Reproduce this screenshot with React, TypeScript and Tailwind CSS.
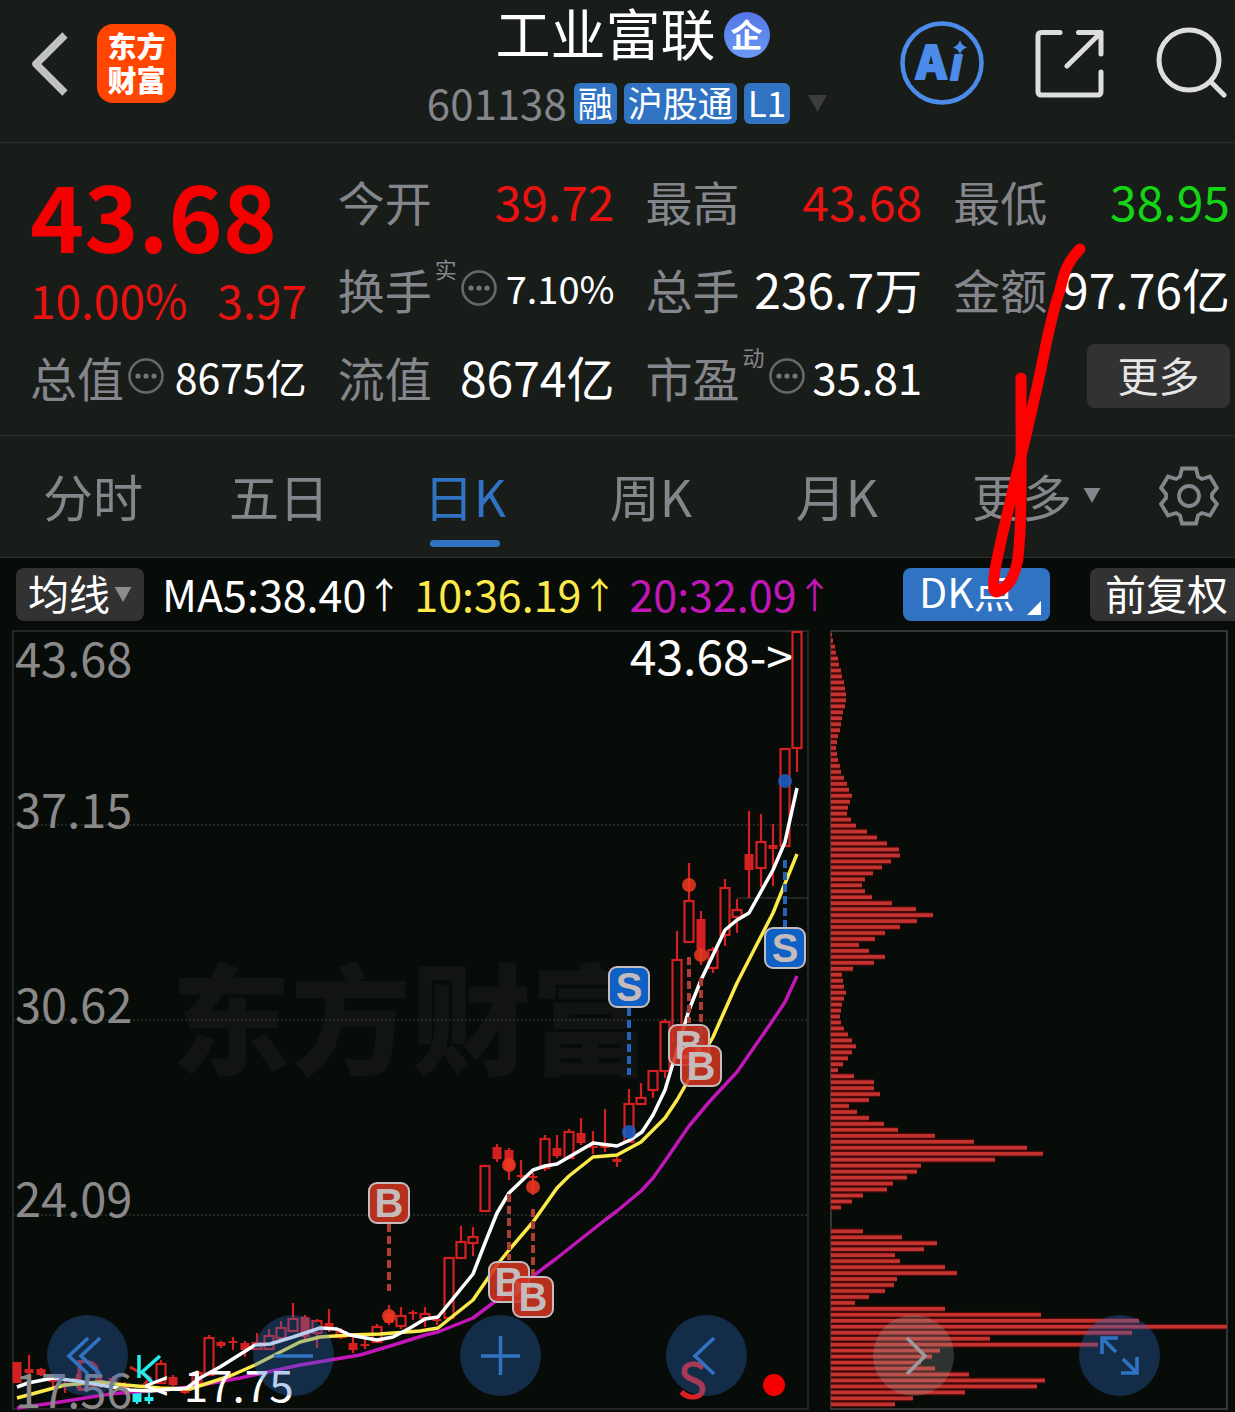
import type { ReactNode } from 'react';

type Candle = [high: number, top: number, bottom: number, low: number, kind: 'up' | 'solid' | 'down'];

const candles: Candle[] = [
  [1362, 1362, 1383, 1383, 'solid'],
  [1355, 1369, 1373, 1374, 'solid'],
  [1368, 1369, 1375, 1376, 'solid'],
  [1376, 1378, 1382, 1387, 'solid'],
  [1381, 1383, 1387, 1393, 'solid'],
  [1374, 1378, 1382, 1388, 'solid'],
  [1378, 1382, 1386, 1390, 'solid'],
  [1376, 1380, 1384, 1388, 'solid'],
  [1376, 1378, 1382, 1384, 'solid'],
  [1382, 1385, 1388, 1395, 'solid'],
  [1392, 1393, 1402, 1404, 'down'],
  [1393, 1397, 1401, 1404, 'down'],
  [1360, 1364, 1383, 1383, 'up'],
  [1375, 1377, 1385, 1386, 'solid'],
  [1388, 1390, 1393, 1394, 'solid'],
  [1370, 1373, 1383, 1383, 'up'],
  [1335, 1338, 1375, 1375, 'up'],
  [1341, 1342, 1346, 1348, 'solid'],
  [1337, 1341, 1343, 1350, 'solid'],
  [1341, 1343, 1350, 1357, 'solid'],
  [1333, 1343, 1349, 1349, 'up'],
  [1329, 1336, 1349, 1349, 'up'],
  [1321, 1328, 1338, 1340, 'up'],
  [1303, 1319, 1331, 1331, 'up'],
  [1315, 1317, 1337, 1340, 'solid'],
  [1319, 1321, 1333, 1348, 'up'],
  [1309, 1323, 1328, 1332, 'solid'],
  [1328, 1332, 1337, 1339, 'up'],
  [1337, 1343, 1350, 1353, 'solid'],
  [1339, 1344, 1346, 1349, 'solid'],
  [1324, 1327, 1342, 1342, 'up'],
  [1305, 1313, 1323, 1325, 'solid'],
  [1307, 1316, 1326, 1329, 'up'],
  [1310, 1312, 1314, 1320, 'solid'],
  [1307, 1314, 1318, 1327, 'up'],
  [1317, 1319, 1321, 1325, 'solid'],
  [1258, 1258, 1318, 1318, 'up'],
  [1226, 1242, 1258, 1258, 'up'],
  [1227, 1237, 1243, 1256, 'up'],
  [1165, 1166, 1211, 1212, 'up'],
  [1144, 1147, 1159, 1162, 'solid'],
  [1148, 1150, 1170, 1180, 'solid'],
  [1160, 1175, 1177, 1179, 'solid'],
  [1173, 1176, 1178, 1195, 'solid'],
  [1135, 1139, 1168, 1171, 'up'],
  [1135, 1148, 1156, 1158, 'solid'],
  [1129, 1132, 1158, 1158, 'up'],
  [1118, 1133, 1143, 1145, 'solid'],
  [1131, 1146, 1148, 1154, 'solid'],
  [1109, 1146, 1148, 1152, 'solid'],
  [1157, 1159, 1162, 1167, 'solid'],
  [1089, 1104, 1142, 1142, 'up'],
  [1083, 1098, 1104, 1104, 'up'],
  [1070, 1071, 1090, 1098, 'up'],
  [1019, 1022, 1071, 1078, 'up'],
  [931, 960, 1040, 1040, 'up'],
  [863, 901, 942, 942, 'up'],
  [911, 919, 949, 965, 'solid'],
  [947, 950, 968, 973, 'up'],
  [879, 888, 935, 946, 'up'],
  [899, 910, 917, 933, 'up'],
  [811, 854, 870, 898, 'solid'],
  [814, 842, 868, 887, 'up'],
  [824, 845, 849, 886, 'solid'],
  [749, 749, 846, 846, 'up'],
  [632, 632, 748, 772, 'up'],
];

const averages = [
  {
    color: '#c216b8',
    points:
      '17,1408 60,1402 110,1394 190,1387 240,1378 300,1365 360,1355 400,1343 425,1335 438,1332 473,1318 497,1300 533,1276 557,1258 605,1220 617,1211 641,1191 653,1178 665,1161 689,1126 710,1101 737,1072 773,1020 785,1002 797,976',
  },
  {
    color: '#fbea4a',
    points:
      '17,1398 65,1385 100,1382 125,1385 160,1388 190,1389 230,1376 255,1365 300,1342 320,1337 350,1335 380,1334 420,1331 438,1328 473,1300 497,1265 509,1250 533,1222 557,1188 569,1176 593,1157 617,1155 641,1142 665,1118 677,1100 713,1037 737,983 773,913 797,854',
  },
  {
    color: '#ffffff',
    points:
      '17,1387 28,1383 53,1378 77,1381 100,1385 130,1390 150,1391 187,1388 200,1378 220,1367 255,1345 270,1344 293,1337 320,1328 337,1329 350,1335 377,1340 393,1337 410,1328 425,1319 438,1317 473,1274 485,1243 497,1213 509,1193 533,1170 545,1166 557,1164 593,1143 617,1146 630,1140 642,1132 653,1115 665,1090 680,1040 689,1010 701,980 725,930 737,920 749,913 773,870 785,842 797,788',
  },
];

const signals = [
  { type: 'B', x: 389, y: 1203, dash: [1224, 1291], dot: 1316 },
  { type: 'B', x: 509, y: 1282, dash: [1194, 1260], dot: 1165 },
  { type: 'B', x: 533, y: 1297, dash: [1209, 1275], dot: 1187 },
  { type: 'S', x: 629, y: 987, dash: [1008, 1075], dot: 1132 },
  { type: 'B', x: 689, y: 1045, dash: [957, 1023], dot: 885 },
  { type: 'B', x: 701, y: 1066, dash: [978, 1045], dot: 955 },
  { type: 'S', x: 785, y: 948, dash: [860, 927], dot: 781 },
];

const scale = [
  { label: '43.68', y: 677 },
  { label: '37.15', y: 828 },
  { label: '30.62', y: 1023 },
  { label: '24.09', y: 1217 },
  { label: '17.56', y: 1408 },
];

const volumes = [
  1, 2, 4, 5, 7, 8, 10, 11, 13, 14, 15, 15, 14, 12, 11, 10, 9, 7, 6, 5, 6, 7, 9, 10, 13, 16, 18, 21, 19, 17, 16, 20, 25,
  36, 46, 56, 68, 69, 60, 51, 42, 34, 31, 34, 41, 61, 85, 102, 86, 69, 54, 44, 28, 38, 54, 43, 22, 11, 12, 13, 15, 13,
  11, 10, 9, 10, 13, 17, 21, 25, 21, 17, 12, 7, 23, 43, 43, 49, 38, 18, 26, 38, 53, 67, 104, 143, 196, 212, 164, 90, 86,
  76, 62, 56, 32, 21, 10, 0, 0, 0, 32, 71, 106, 93, 64, 69, 114, 126, 66, 63, 54, 38, 24, 114, 210, 308, 396, 301, 159,
  267, 109, 101, 90, 104, 138, 214, 206, 134, 82, 64,
];

const tabs = ['分时', '五日', '日K', '周K', '月K'];

const movingAverages = [
  { text: 'MA5:38.40', className: 'text-white' },
  { text: '10:36.19', className: 'text-[#fbea4a]' },
  { text: '20:32.09', className: 'text-[#c216b8]' },
];

function Caret({ className }: { className: string }) {
  return (
    <svg viewBox="0 0 18 16" className={className} aria-hidden="true">
      <path d="M0 0H18L9 16Z" fill="currentColor" />
    </svg>
  );
}

function InfoDots() {
  return (
    <button aria-label="说明" className="ml-1 shrink-0">
      <svg viewBox="0 0 36 36" className="block h-9 w-9">
        <circle cx="18" cy="18" r="16.5" fill="none" stroke="#686868" strokeWidth="2.6" />
        <g fill="#777">
          <circle cx="10" cy="18" r="2.6" />
          <circle cx="18" cy="18" r="2.6" />
          <circle cx="26" cy="18" r="2.6" />
        </g>
      </svg>
    </button>
  );
}

type StatProps = { label: string; value: string; note?: string; info?: boolean; className: string };

function Stat({ label, value, note, info, className }: StatProps) {
  return (
    <div className="flex h-[88px] items-center whitespace-nowrap">
      <span className="text-[47px] leading-none text-[#85858c]">{label}</span>
      {note && <sup className="top-0 ml-[3px] self-start pt-3 text-[22px] leading-6 text-[#85858c]">{note}</sup>}
      {info && <InfoDots />}
      <span className={`ml-auto leading-none ${className}`}>{value}</span>
    </div>
  );
}

function Header() {
  return (
    <header className="grid h-[143px] grid-cols-[1fr_auto_1fr] border-b border-[#2d2f2e] pr-2 pl-[30px]">
      <div className="flex items-start gap-7 pt-6">
        <button aria-label="返回" className="pt-2">
          <svg viewBox="0 0 39 64" className="block h-16 w-[39px]">
            <path d="M35 3L6 32L35 61" fill="none" stroke="#c2c2c2" strokeWidth="7.5" strokeLinejoin="round" />
          </svg>
        </button>
        <div className="flex h-[79px] w-[79px] flex-col items-center justify-center rounded-2xl bg-[#ff4500] pb-1 text-[29px] leading-[34px] font-black text-white">
          <span>东方</span>
          <span>财富</span>
        </div>
      </div>

      <div className="flex flex-col items-center">
        <div className="flex h-[70px] items-center gap-2 pl-2">
          <h1 className="pb-2 text-[55px] leading-[62px] text-white">工业富联</h1>
          <span className="flex h-[46px] w-[46px] items-center justify-center rounded-full bg-gradient-to-b from-[#5476e6] to-[#6a9bf5] pb-1 text-[32px] leading-none font-bold text-white">
            企
          </span>
        </div>
        <div className="flex h-[67px] items-center gap-[7px]">
          <span className="pb-1 text-[42px] leading-none text-[#85858c]">601138</span>
          <span className="flex h-[41px] items-center rounded-md bg-[#3073c3] px-1 text-[35px] leading-none text-white">
            <span className="pb-1">融</span>
          </span>
          <span className="flex h-[41px] items-center rounded-md bg-[#3073c3] px-1 text-[35px] leading-none text-white">
            <span className="pb-1">沪股通</span>
          </span>
          <span className="flex h-[41px] items-center rounded-md bg-[#3073c3] px-1 text-[35px] leading-none text-white">
            <span className="pb-1">L1</span>
          </span>
          <Caret className="ml-2 h-[17px] w-[25px] text-[#3c3c3c]" />
        </div>
      </div>

      <div className="flex items-start justify-end gap-[51px] pt-[21px]">
        <button aria-label="AI 助手">
          <svg viewBox="0 0 84 84" className="block h-[84px] w-[84px]">
            <circle cx="42" cy="42" r="39.5" fill="none" stroke="#4c8bea" strokeWidth="4.5" />
            <g fontSize="46" fontWeight="900" fill="#4c8bea" stroke="#4c8bea" strokeWidth="2" strokeLinejoin="round">
              <text x="16" y="58">
                A
              </text>
              <text x="50" y="59" fontStyle="italic">
                ı
              </text>
            </g>
            <path d="M60 19Q61.500 24.500 67 26.500Q61.500 28 60 33.500Q58.500 28 53 26.500Q58.500 24.500 60 19Z" fill="#4c8bea" />
          </svg>
        </button>
        <button aria-label="分享" className="pt-2">
          <svg viewBox="0 0 70 70" className="block h-[70px] w-[70px]">
            <g fill="none" stroke="#dedede" strokeWidth="5" strokeLinecap="round" strokeLinejoin="round">
              <path d="M25 3.500H6.500Q3 3.500 3 7V62.500Q3 66 6.500 66H62.500Q66 66 66 62.500V43" />
              <path d="M43.500 3.500H66V25M66 3.500L32 37" />
            </g>
          </svg>
        </button>
        <button aria-label="搜索" className="pt-[6px]">
          <svg viewBox="0 0 71 71" className="block h-[71px] w-[71px]">
            <g fill="none" stroke="#dedede" strokeWidth="5" strokeLinecap="round">
              <circle cx="33" cy="33" r="30" />
              <path d="M55 55L68 68" />
            </g>
          </svg>
        </button>
      </div>
    </header>
  );
}

function Quote() {
  return (
    <section className="grid grid-cols-4 gap-x-[31px] border-b border-[#2d2f2e] pt-[13px] pr-[5px] pb-[15px] pl-[30px]">
      <div>
        <div className="flex h-[114px] items-center text-[92px] leading-none font-bold text-[#f40000]">43.68</div>
        <div className="flex h-[62px] items-center justify-between pb-1 text-[46px] leading-none text-[#e81210]">
          <span>10.00%</span>
          <span>3.97</span>
        </div>
        <Stat label="总值" info value="8675亿" className="text-[41px] text-white" />
      </div>
      <div>
        <Stat label="今开" value="39.72" className="text-[48px] text-[#e81210]" />
        <Stat label="换手" note="实" info value="7.10%" className="text-[38px] text-white" />
        <Stat label="流值" value="8674亿" className="text-[48px] text-white" />
      </div>
      <div>
        <Stat label="最高" value="43.68" className="text-[48px] text-[#e81210]" />
        <Stat label="总手" value="236.7万" className="text-[48px] text-white" />
        <Stat label="市盈" note="动" info value="35.81" className="text-[44px] text-white" />
      </div>
      <div>
        <Stat label="最低" value="38.95" className="text-[48px] text-[#14d514]" />
        <Stat label="金额" value="97.76亿" className="text-[48px] text-white" />
        <div className="flex h-[88px] items-center justify-end">
          <button className="h-16 w-[143px] rounded-lg bg-[#323232] pb-1 text-[41px] leading-none text-[#e6e6e6]">
            更多
          </button>
        </div>
      </div>
    </section>
  );
}

function Tabs() {
  return (
    <nav className="grid h-[122px] grid-cols-[repeat(5,186fr)_213fr_92fr] border-b border-[#2d2f2e] text-[50px] leading-none text-[#85858c]">
      {tabs.map((tab) => {
        const active = tab === '日K';
        return (
          <button key={tab} className={`flex flex-col items-center pt-[34px] ${active ? 'text-[#3073c3]' : ''}`}>
            {tab}
            {active && <span className="mt-5 h-[7px] w-[70px] rounded-full bg-[#3073c3]" />}
          </button>
        );
      })}
      <button className="flex items-start justify-center gap-[11px] pt-[34px]">
        更多
        <Caret className="mt-[18px] h-[15px] w-[18px]" />
      </button>
      <button aria-label="设置" className="flex justify-center pt-[30px]">
        <svg viewBox="0 0 60 60" className="h-[60px] w-[60px]">
          <g fill="none" stroke="currentColor" strokeWidth="3.8">
            <path d="M23 2.500H37L39 10.500L43 13L51 10.500L58 22L53 28V32L58 38L51 49.500L43 47L39 49.500L37 57.500H23L21 49.500L17 47L9 49.500L2 38L7 32V28L2 22L9 10.500L17 13L21 10.500Z" />
            <circle cx="30" cy="30" r="10" />
          </g>
        </svg>
      </button>
    </nav>
  );
}

function Toolbar() {
  return (
    <div className="flex h-[72px] items-center overflow-hidden pl-4 text-[41px] leading-none whitespace-nowrap text-white">
      <button className="flex h-[53px] w-32 shrink-0 items-center justify-center gap-1 rounded-lg bg-[#323232]">
        <span className="pb-1">均线</span>
        <Caret className="h-[15px] w-[18px] text-[#8a8d90]" />
      </button>
      <div className="ml-[18px] flex gap-3 pb-[2px] text-[43px]">
        {movingAverages.map(({ text, className }) => (
          <span key={text} className={`flex items-center ${className}`}>
            {text}
            <span className="text-[36px]">↑</span>
          </span>
        ))}
      </div>
      <button className="ml-auto flex h-[53px] w-[147px] shrink-0 items-end rounded-lg bg-[#3073c3] pb-[6px] pl-4">
        <span className="pb-1">DK点</span>
        <svg viewBox="0 0 14 14" className="ml-3 h-[14px] w-[14px]" aria-hidden="true">
          <path d="M14 0V14H0Z" fill="#fff" />
        </svg>
      </button>
      <button className="ml-10 h-[53px] w-[145px] shrink-0 rounded-l-lg bg-[#323232] pb-1 pl-2">前复权</button>
    </div>
  );
}

function CandleShape({ candle, index }: { candle: Candle; index: number }) {
  const [high, top, bottom, low, kind] = candle;
  const x = 17 + index * 12;
  const color = kind === 'down' ? '#22eef0' : '#d42020';
  return (
    <g stroke={color} strokeWidth="2.2">
      <path d={`M${x} ${high}V${top}M${x} ${bottom}V${low}`} />
      {kind === 'up' ? (
        <rect x={x - 4.5} y={top} width="9" height={bottom - top} fill="none" />
      ) : (
        <rect x={x - 4.5} y={top} width="9" height={bottom - top} fill={color} stroke="none" />
      )}
    </g>
  );
}

function KLineChart() {
  return (
    <svg viewBox="12 630 797 780" className="block w-full overflow-visible" role="img" aria-label="日K线">
      <text x="171" y="1066" fontSize="120" fontWeight="900" fill="#111412">
        东方财富
      </text>
      <g stroke="#2b2e2c" strokeWidth="1.5" fill="none">
        <rect x="13" y="631" width="795" height="778" strokeWidth="2" stroke="#242625" />
        <path d="M13 825H808M13 1020H808M13 1215H808" strokeDasharray="2 2" />
        <path d="M737 898H808" />
      </g>
      {candles.map((candle, i) => (
        <CandleShape key={i} candle={candle} index={i} />
      ))}
      <text x="73" y="1391" fontSize="42" fill="#c02228">
        D
      </text>
      <path d="M130 1367L150 1378L142 1387" fill="none" stroke="#d42020" strokeWidth="3" />
      <path d="M139 1355V1378M160 1356L142 1372L152 1382" fill="none" stroke="#22eef0" strokeWidth="3.500" />
      {averages.map(({ color, points }) => (
        <polyline key={color} points={points} fill="none" stroke={color} strokeWidth="3.5" strokeLinejoin="round" />
      ))}
      {scale.map(({ label, y }) => (
        <text key={label} x="15" y={y} fontSize="47" fill="#8a8888">
          {label}
        </text>
      ))}
      <text x="793" y="675" fontSize="48" fill="#fff" textAnchor="end">
        43.68-&gt;
      </text>
      <text x="144" y="1402" fontSize="44" fill="#fff">
        &lt;-17.75
      </text>
      {signals.map(({ type, x, y, dash, dot }) => {
        const buy = type === 'B';
        return (
          <g key={`${x}-${y}`}>
            <path
              d={`M${x} ${dash[0]}V${dash[1]}`}
              stroke={buy ? '#b03c32' : '#2464b8'}
              strokeWidth="4"
              strokeDasharray="8 4"
            />
            <circle cx={x} cy={dot} r="7" fill={buy ? '#f03a22' : '#1c60c8'} opacity="0.85" />
            <rect
              x={x - 20}
              y={y - 20}
              width="40"
              height="40"
              rx="8"
              fill={buy ? '#d03420' : '#0f60c4'}
              fillOpacity={buy ? 0.88 : 1}
              stroke="#c6bcc0"
              strokeWidth="2"
            />
            <text
              x={x}
              y={y + 14}
              fontSize="40"
              fontWeight="700"
              textAnchor="middle"
              fill="#c4bcbc"
              className="font-['Liberation_Sans',sans-serif]">
              {type}
            </text>
          </g>
        );
      })}
      <text x="678" y="1398" fontSize="48" fill="#e02020" stroke="#e02020">
        S
      </text>
      <circle cx="774" cy="1385" r="11" fill="#f40000" />
    </svg>
  );
}

function ChipChart() {
  return (
    <svg viewBox="830 630 398 780" className="block w-full" role="img" aria-label="筹码分布">
      <rect x="831" y="631" width="396" height="778" fill="none" stroke="#343635" strokeWidth="2" />
      <rect x="831" y="633" width="1" height="574" fill="#5a0d0d" />
      {volumes.map((width, i) => (
        <g key={i}>
          <rect x="831" y={631.7 + i * 5.966} width={width} height="6" fill="#4a0a0a" />
          <rect x="831" y={632.9 + i * 5.966} width={width} height="3.6" fill="#c4332f" />
        </g>
      ))}
    </svg>
  );
}

function RoundButton({ label, muted, children }: { label: string; muted?: boolean; children: ReactNode }) {
  const tone = muted ? 'bg-[#a0aaa5]/25 text-[#9a9a9e]' : 'bg-[#2e6ec8]/33 text-[#3073c3]';
  return (
    <button aria-label={label} className={`h-[81px] w-[81px] rounded-full ${tone}`}>
      <svg viewBox="0 0 81 81" className="block h-full w-full">
        <g fill="none" stroke="currentColor" strokeWidth="3.6">
          {children}
        </g>
      </svg>
    </button>
  );
}

function Controls() {
  return (
    <div className="absolute inset-x-0 bottom-4 flex justify-between pr-[75px] pl-[47px]">
      <RoundButton label="最早">
        <path d="M41 23L22 41L41 59M53 23L34 41L53 59" />
      </RoundButton>
      <RoundButton label="缩小">
        <path d="M21 41H60" />
      </RoundButton>
      <RoundButton label="放大">
        <path d="M21 41H60M40.500 21V60" />
      </RoundButton>
      <RoundButton label="向左">
        <path d="M48 23L29 41L48 59" />
      </RoundButton>
      <RoundButton label="向右" muted>
        <path d="M34 23L52 41L34 59" />
      </RoundButton>
      <RoundButton label="全屏">
        <path d="M39 23H23V39M23 23L37 37M42 58H58V42M58 58L44 44" />
      </RoundButton>
    </div>
  );
}

export default function App() {
  return (
    <div className="relative overflow-hidden bg-[#191d1a] font-['Noto_Sans_CJK_SC',sans-serif]">
      <Header />
      <Quote />
      <Tabs />
      <main className="relative bg-[#070c08] pb-[2px]">
        <Toolbar />
        <div className="flex items-start gap-[21px] pr-[7px] pl-3">
          <div className="min-w-0 flex-[797]">
            <KLineChart />
          </div>
          <div className="min-w-0 flex-[398]">
            <ChipChart />
          </div>
        </div>
        <Controls />
      </main>
      {/* hand-drawn pen stroke above everything */}
      <svg
        viewBox="980 240 110 365"
        className="pointer-events-none absolute top-[240px] right-[145px] h-[365px] w-[110px]"
        aria-hidden="true">
        <path
          d="M1080 249C1068 261 1064 272 1060 290C1048 325 1044 360 1034 400C1022 455 1000 540 995 570C992 590 994 594 999 591C1010 586 1015 575 1018 558C1022 520 1021 480 1021 378"
          fill="none"
          stroke="#ff0000"
          strokeWidth="11"
          strokeLinecap="round"
          strokeLinejoin="round"
        />
      </svg>
    </div>
  );
}
